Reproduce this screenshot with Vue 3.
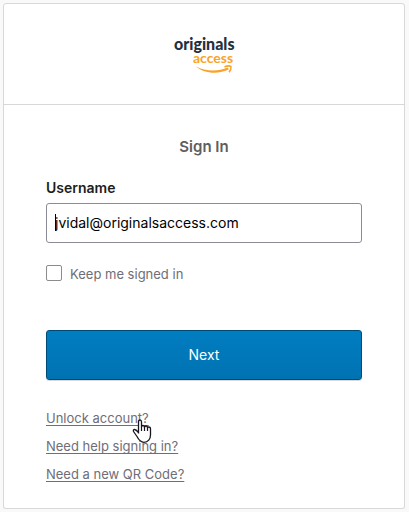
<script setup>
import { ref } from 'vue'

const username = ref('jvidal@originalsaccess.com')
const remember = ref(false)
const links = ['Unlock account?', 'Need help signing in?', 'Need a new QR Code?']
</script>

<template>
  <main class="card">
    <header class="header">
      <svg class="logo" viewBox="0 0 62 40" role="img" aria-label="originals access">
        <text class="logo-top" x="1" y="14">originals</text>
        <text class="logo-bottom" x="20" y="27">access</text>
        <path d="M23 30.200 C32 35.500 45 36 54.500 31.500 L56 33.200 C46 38.500 31 38 23 30.200Z" fill="#f9a32b" />
        <path d="M51.500 31 C54 29.700 56.500 29.700 58 30.500 C58.300 32.500 57.500 34.500 56 36.200" fill="none" stroke="#f9a32b" stroke-width="1.500" />
      </svg>
    </header>
    <form class="form" @submit.prevent>
      <h1 class="title">Sign In</h1>
      <label class="label" for="username">Username</label>
      <div class="field">
        <input id="username" v-model="username" class="input" type="text" autocomplete="username" />
        <span class="caret"></span>
      </div>
      <label class="remember">
        <input v-model="remember" class="checkbox" type="checkbox" />
        <span class="remember-text">Keep me signed in</span>
      </label>
      <button class="submit" type="submit">Next</button>
      <ul class="links">
        <li v-for="(link, i) in links" :key="link">
          <a class="link" href="#">{{ link }}</a>
          <svg v-if="i === 0" class="pointer" viewBox="0 0 20 24" aria-hidden="true">
            <path
              d="M6.500 14.500 V3 Q6.500 1 8 1 Q9.500 1 9.500 3 V8 Q9.500 6.500 11 6.500 Q12.500 6.500 12.500 8.500 Q12.500 7 14 7 Q15.500 7 15.500 9 Q15.500 8 16.800 8 Q18.500 8 18.500 10 V16 C18.500 20 16 23.300 12 23.300 C8 23.300 6.500 20.500 5 17.500 L1.500 12.500 Q1 10.500 2.500 10.500 Q4 10.500 6.500 13.500"
              fill="#fff"
              stroke="#15151d"
              stroke-width="1.300"
              stroke-linejoin="round"
            />
            <path d="M9.500 8 V12 M12.500 8.500 V12 M15.500 9 V12" stroke="#15151d" stroke-width="1.200" />
          </svg>
        </li>
      </ul>
    </form>
  </main>
</template>

<style>
body {
  background: #f9f9f9;
}
</style>

<style scoped>
.card {
  box-sizing: border-box;
  margin: 3px 4px 0 3px;
  border: 1px solid #d8d8d8;
  border-radius: 3px;
  background: #fff;
  box-shadow: 0 2px 0 rgba(175, 175, 175, 0.12);
  color: #6e6e78;
  font-family: Inter, sans-serif;
  font-size: 13px;
  line-height: 16px;
}
.header {
  display: flex;
  justify-content: center;
  padding: 32px 0 28px;
  border-bottom: 1px solid #d8d8d8;
}
.logo {
  display: block;
  width: 62px;
  height: 40px;
  overflow: visible;
}
.logo-top,
.logo-bottom {
  font-family: Lato, sans-serif;
}
.logo-top {
  font-size: 16px;
  font-weight: 900;
  fill: #232f3e;
}
.logo-bottom {
  font-size: 14px;
  font-weight: 700;
  fill: #f9a32b;
}
.form {
  display: flex;
  flex-direction: column;
  padding: 32px 42px 26px;
}
.title {
  margin: 0 0 23px;
  color: #5e5e5e;
  font-size: 15px;
  font-weight: 600;
  line-height: 20px;
  text-align: center;
}
.label {
  margin-bottom: 7px;
  color: #1d1d21;
  font-size: 14px;
  font-weight: 600;
}
.field {
  position: relative;
}
.input {
  display: block;
  box-sizing: border-box;
  width: 100%;
  height: 40px;
  padding: 0 8px 2px;
  border: 1px solid #8c8c96;
  border-radius: 3px;
  outline: none;
  background: #fff;
  color: #000;
  font: 14px Inter, sans-serif;
}
.caret {
  position: absolute;
  top: 11px;
  left: 9px;
  width: 1px;
  height: 17px;
  background: #000;
}
.remember {
  display: flex;
  align-items: center;
  gap: 8px;
  margin-top: 20px;
  line-height: 18px;
}
.remember-text {
  padding-top: 2px;
}
.checkbox {
  appearance: none;
  box-sizing: border-box;
  width: 16px;
  height: 16px;
  margin: 0;
  border: 1px solid #8c8c8c;
  border-radius: 2px;
}
.submit {
  height: 50px;
  margin-top: 47px;
  padding: 0 0 2px;
  border: 1px solid #004b75;
  border-radius: 3px;
  background: linear-gradient(#007dc1, #0073b2);
  box-shadow: 0 1px 0 rgba(0, 0, 0, 0.15);
  color: #fff;
  font: 14px Inter, sans-serif;
}
.links {
  display: flex;
  flex-direction: column;
  gap: 12px;
  margin: 30px 0 0;
  padding: 0;
  list-style: none;
}
.links li {
  position: relative;
}
.link {
  color: inherit;
  text-decoration: underline;
  text-decoration-skip-ink: none;
  text-underline-offset: 2px;
}
.pointer {
  position: absolute;
  top: 9px;
  left: 86px;
  z-index: 1;
  width: 20px;
  height: 24px;
}
</style>
